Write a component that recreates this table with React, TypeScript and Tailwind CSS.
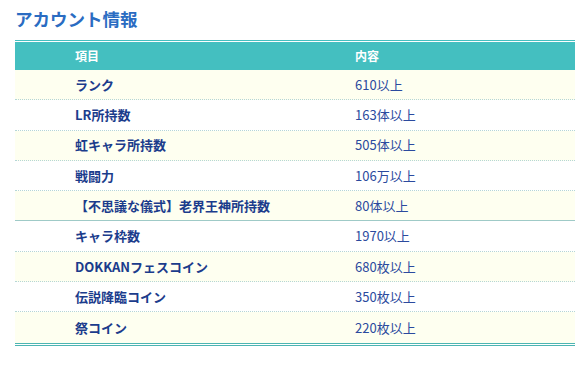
const rows: { label: string; value: string }[] = [
  { label: "ランク", value: "610以上" },
  { label: "LR所持数", value: "163体以上" },
  { label: "虹キャラ所持数", value: "505体以上" },
  { label: "戦闘力", value: "106万以上" },
  { label: "【不思議な儀式】老界王神所持数", value: "80体以上" },
  { label: "キャラ枠数", value: "1970以上" },
  { label: "DOKKANフェスコイン", value: "680枚以上" },
  { label: "伝説降臨コイン", value: "350枚以上" },
  { label: "祭コイン", value: "220枚以上" },
];

export default function App() {
  return (
    <div
      className="min-h-[377px] w-[586px] bg-white pl-[15px] pr-[11px]"
      style={{ fontFamily: '"Noto Sans CJK JP", "Noto Sans", sans-serif' }}
    >
      <h2 className="flex h-[38px] items-center pt-px text-[17.5px] font-bold text-[#2a6cc2]">
        アカウント情報
      </h2>

      <div className="mt-[2px] border-t border-[#44bfc0] pt-px">
        <div className="flex h-[28px] items-center bg-[#44bfc0] text-[12px] font-bold text-white">
          <div className="w-1/2 pl-[60px]">項目</div>
          <div className="w-1/2 pl-[60px]">内容</div>
        </div>
      </div>

      <div className="border-b-[3px] border-double border-[#4cb5b2]">
        {rows.map((row, i) => {
          const last = i === rows.length - 1;
          const sep =
            i === 4
              ? "border-b border-solid border-[#9fcac7]"
              : last
                ? ""
                : "border-b border-dotted border-[#b5d6d6]";
          return (
            <div
              key={row.label}
              className={`flex h-[30.3px] items-center text-[13px] ${
                i % 2 === 0 ? "bg-[#fefff0]" : "bg-white"
              } ${sep}`}
            >
              <div className="w-1/2 pl-[60px] font-bold text-[#1b3c8c]">{row.label}</div>
              <div className="w-1/2 pl-[60px] text-[#2b4a9e]">{row.value}</div>
            </div>
          );
        })}
      </div>
    </div>
  );
}
